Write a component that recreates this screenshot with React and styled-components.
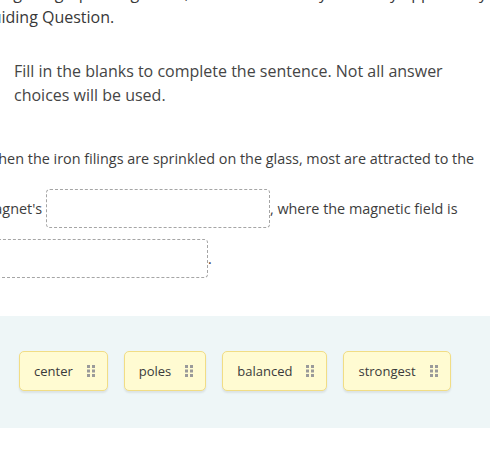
import React from "react";
import styled, { createGlobalStyle } from "styled-components";

const GlobalStyle = createGlobalStyle`
  html, body {
    margin: 0;
    padding: 0;
    background: #fff;
    overflow: hidden;
  }
  body {
    font-family: "Open Sans", "Lato", sans-serif;
    color: #3d3d3d;
  }
`;

const choices = ["center", "poles", "balanced", "strongest"];

function Handle() {
  return (
    <svg width="8" height="12" viewBox="0 0 8 12">
      {[0, 1, 2].map((r) =>
        [0, 1].map((c) => (
          <rect key={`${r}-${c}`} x={c * 5} y={r * 4.5} width="3" height="3" fill="#9a9a9a" />
        ))
      )}
    </svg>
  );
}

export default function App() {
  return (
    <>
      <GlobalStyle />
      <Page>
        <Intro>
          Using the graphic organizer, think about how your study applies to your reply to the
          <br />
          Guiding Question.
        </Intro>
        <Directions>
          Fill in the blanks to complete the sentence. Not all answer choices will be used.
        </Directions>
        <Sentence>
          <Line>When the iron filings are sprinkled on the glass, most are attracted to the</Line>
          <Line $shift={-4}>
            magnet's <Blank $width={224} />, where the magnetic field is
          </Line>
          <Line $shift={-1}>
            <Blank $width={224} />.
          </Line>
        </Sentence>
      </Page>
      <Tray>
        {choices.map((c) => (
          <Chip key={c}>
            <span>{c}</span>
            <Handle />
          </Chip>
        ))}
      </Tray>
    </>
  );
}

const Page = styled.div`
  margin-left: -15px;
  margin-top: -19px;
  width: 505px;
`;

const Intro = styled.p`
  margin: 0 0 0 -5px;
  font-size: 16px;
  line-height: 24px;
  white-space: nowrap;
  color: #383838;
`;

const Directions = styled.p`
  margin: 30px 0 0;
  padding-left: 29px;
  padding-right: 40px;
  font-size: 16px;
  line-height: 24px;
  color: #454545;
`;

const Sentence = styled.div`
  margin: 27px 0 0;
  font-size: 14.4px;
`;

const Line = styled.div`
  height: 50px;
  line-height: 50px;
  white-space: nowrap;
  margin-left: ${(p) => p.$shift || 0}px;
`;

const Blank = styled.span`
  display: inline-block;
  vertical-align: middle;
  box-sizing: border-box;
  width: ${(p) => p.$width}px;
  height: 39px;
  margin-bottom: 4px;
  border: 1px dashed #a5a5a5;
  border-radius: 4px;
  background: #fff;
`;

const Tray = styled.div`
  margin-top: 32px;
  height: 112px;
  box-sizing: border-box;
  padding: 35px 19px 0;
  background: #eef6f7;
  display: flex;
  gap: 16px;
  align-items: flex-start;
`;

const Chip = styled.div`
  display: flex;
  align-items: center;
  gap: 14px;
  height: 40px;
  box-sizing: border-box;
  padding: 0 12px 0 14px;
  background: #fffbd2;
  border: 1px solid #f1dd85;
  border-radius: 5px;
  box-shadow: 0 2px 2px rgba(0, 0, 0, 0.08);
  font-size: 13px;
  color: #3a3a3a;
`;
